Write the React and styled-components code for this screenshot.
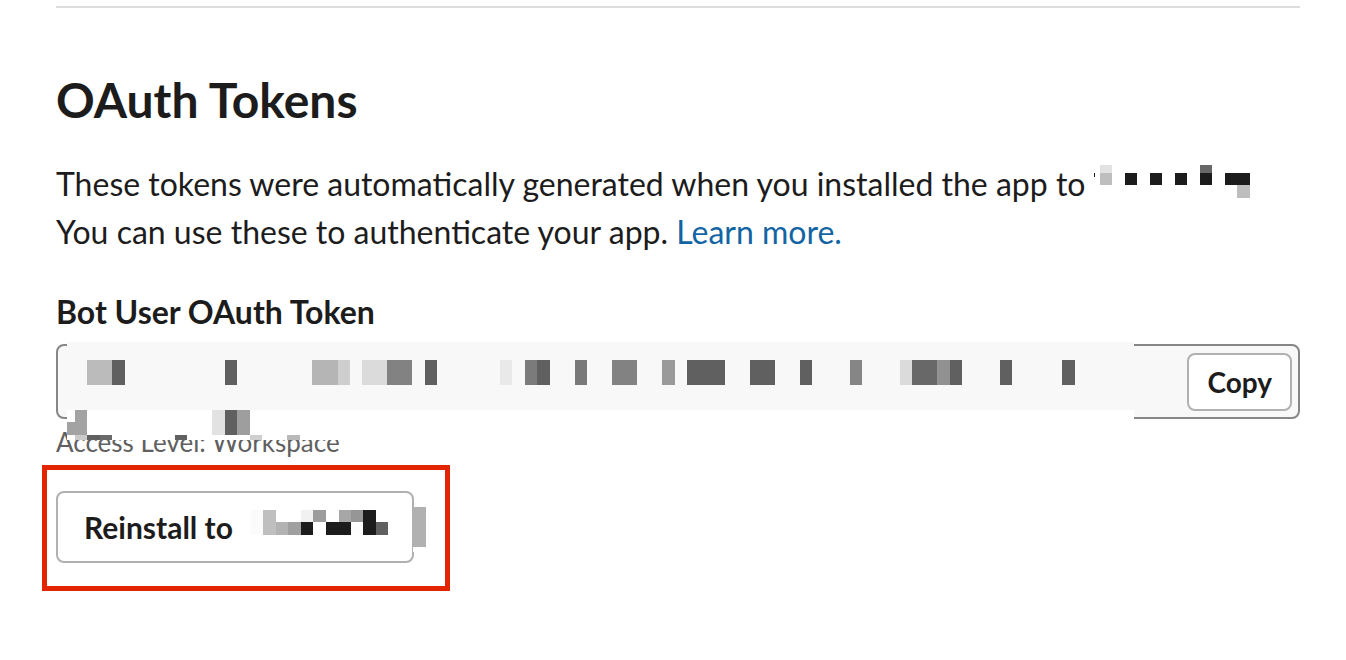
import React from "react";
import styled, { createGlobalStyle } from "styled-components";

const GlobalStyle = createGlobalStyle`
  *, *::before, *::after { box-sizing: border-box; }
  body {
    margin: 0;
    background: #fff;
    color: #1d1c1d;
    font-family: Lato, "Open Sans", sans-serif;
    font-size: 32px;
    line-height: 48px;
  }
`;

const Page = styled.main`
  padding: 6px 46px 40px 56px;
`;

const Divider = styled.hr`
  margin: 0;
  border: 0;
  border-top: 2px solid #dddddd;
`;

const Title = styled.h2`
  margin: 63px 0 31px;
  font-size: 48px;
  line-height: 58px;
  font-weight: 700;
`;

const Description = styled.p`
  margin: 0 0 32px;
`;

const Link = styled.a`
  color: #1264a3;
  text-decoration: none;
`;

const FieldLabel = styled.label`
  display: block;
  margin-bottom: 8px;
  font-weight: 700;
`;

const TokenField = styled.div`
  position: relative;
  display: flex;
  align-items: center;
  height: 75px;
  padding: 0 6px 0 16px;
  border: 2px solid #868686;
  border-radius: 8px;
  background: #f8f8f8;
`;

const TokenInput = styled.input`
  flex: 1;
  min-width: 0;
  border: 0;
  outline: 0;
  background: transparent;
  color: inherit;
  font: inherit;
`;

const Button = styled.button`
  display: flex;
  align-items: center;
  height: ${(p) => (p.$large ? 72 : 58)}px;
  padding: 0 ${(p) => (p.$large ? 24 : 18)}px 0 ${(p) => (p.$large ? 26 : 18)}px;
  gap: 18px;
  border: 2px solid #b1b1b1;
  border-radius: 8px;
  background: #fff;
  color: inherit;
  font: 700 ${(p) => (p.$large ? 30 : 28)}px/36px Lato, "Open Sans", sans-serif;
  white-space: nowrap;
`;

const Hint = styled.p`
  margin: 5px 0;
  color: #616061;
  font-size: 26px;
  line-height: 36px;
`;

const Highlight = styled.div`
  display: inline-block;
  margin-left: -14px;
  padding: 21px 31px 23px 9px;
  border: 5px solid #e32400;
`;

const ReinstallWrap = styled.div`
  position: relative;
`;

const InlineMosaic = styled.svg`
  margin-left: -3px;
  vertical-align: -2px;
`;

const TokenMosaic = styled.svg`
  position: absolute;
  z-index: 1;
  top: -4px;
  left: 9px;
  pointer-events: none;
`;

const EdgeMosaic = styled.svg`
  position: absolute;
  top: 16px;
  right: -13px;
`;

const workspaceBlocks = [
  [3, 8, 1, 4, "#1d1c1d"],
  [9, 0, 12, 8, "#e2e2e2"],
  [9, 8, 12, 12, "#bebebe"],
  [34, 8, 12, 12, "#1d1c1d"],
  [59, 8, 12, 12, "#1d1c1d"],
  [84, 8, 12, 12, "#1d1c1d"],
  [109, 0, 12, 8, "#686868"],
  [109, 8, 12, 12, "#1d1c1d"],
  [134, 8, 25, 12, "#1d1c1d"],
  [146, 20, 13, 13, "#bebebe"],
];

const tokenBlocks = [
  [0, 0, 1067, 68, "#f8f8f8"],
  [0, 68, 1067, 30, "#ffffff"],
  [20, 18, 25, 25, "#bbbbbb"],
  [45, 18, 13, 25, "#606060"],
  [158, 18, 12, 25, "#606060"],
  [245, 18, 26, 25, "#b5b5b5"],
  [271, 18, 12, 25, "#cecece"],
  [295, 18, 25, 25, "#dbdbdb"],
  [320, 18, 25, 25, "#828282"],
  [358, 18, 12, 25, "#606060"],
  [433, 18, 12, 25, "#e9e9e9"],
  [458, 18, 12, 25, "#7b7b7b"],
  [470, 18, 13, 25, "#606060"],
  [508, 18, 12, 25, "#797979"],
  [545, 18, 25, 25, "#828282"],
  [595, 18, 13, 25, "#9a9a9a"],
  [620, 18, 38, 25, "#606060"],
  [683, 18, 25, 25, "#606060"],
  [733, 18, 12, 25, "#606060"],
  [783, 18, 12, 25, "#868686"],
  [833, 18, 12, 25, "#dbdbdb"],
  [845, 18, 25, 25, "#686868"],
  [870, 18, 13, 25, "#919191"],
  [883, 18, 12, 25, "#606060"],
  [933, 18, 12, 25, "#606060"],
  [995, 18, 13, 25, "#606060"],
  [8, 68, 12, 12, "#a3a3a3"],
  [0, 80, 20, 13, "#a3a3a3"],
  [145, 68, 13, 25, "#e2e2e2"],
  [158, 68, 12, 25, "#606060"],
  [170, 68, 13, 25, "#9e9e9e"],
  [8, 93, 12, 5, "#cacaca"],
  [20, 93, 13, 5, "#606060"],
  [33, 93, 12, 5, "#6a6a6a"],
  [108, 93, 12, 5, "#606060"],
  [183, 93, 12, 5, "#cfcfcf"],
  [220, 93, 13, 5, "#b9b9b9"],
];

const reinstallBlocks = [
  [0, 0, 12, 25, "#fbfbfb"],
  [12, 0, 13, 25, "#bfbfbf"],
  [25, 12, 12, 13, "#b3b3b3"],
  [37, 12, 13, 13, "#a0a0a0"],
  [50, 0, 12, 12, "#f1f1f1"],
  [50, 12, 12, 13, "#1d1c1d"],
  [62, 0, 13, 12, "#9c9c9c"],
  [75, 12, 25, 13, "#1d1c1d"],
  [88, 0, 12, 12, "#a7a7a7"],
  [100, 0, 12, 12, "#969696"],
  [100, 12, 12, 13, "#fdfdfd"],
  [112, 0, 13, 25, "#1d1c1d"],
  [125, 12, 12, 13, "#606060"],
];

const edgeBlocks = [
  [0, 0, 13, 45, "#ffffff"],
  [0, 0, 13, 40, "#b1b1b1"],
];

function Blocks({ items }) {
  return items.map(([x, y, width, height, fill], i) => (
    <rect key={i} x={x} y={y} width={width} height={height} fill={fill} />
  ));
}

export default function App() {
  return (
    <>
      <GlobalStyle />
      <Page>
        <Divider />
        <Title>OAuth Tokens</Title>
        <Description>
          These tokens were automatically generated when you installed the app to{" "}
          <InlineMosaic width="159" height="33" shapeRendering="crispEdges" aria-hidden="true">
            <Blocks items={workspaceBlocks} />
          </InlineMosaic>
          <br />
          You can use these to authenticate your app. <Link href="#learn-more">Learn more.</Link>
        </Description>

        <FieldLabel htmlFor="bot-token">Bot User OAuth Token</FieldLabel>
        <TokenField>
          <TokenInput id="bot-token" type="text" readOnly />
          <Button type="button">Copy</Button>
          <TokenMosaic width="1067" height="98" shapeRendering="crispEdges" aria-hidden="true">
            <Blocks items={tokenBlocks} />
          </TokenMosaic>
        </TokenField>
        <Hint>Access Level: Workspace</Hint>

        <Highlight>
          <ReinstallWrap>
            <Button type="button" $large>
              Reinstall to
              <svg width="137" height="35" shapeRendering="crispEdges" aria-hidden="true">
                <Blocks items={reinstallBlocks} />
              </svg>
            </Button>
            <EdgeMosaic width="14" height="45" shapeRendering="crispEdges" aria-hidden="true">
              <Blocks items={edgeBlocks} />
            </EdgeMosaic>
          </ReinstallWrap>
        </Highlight>
      </Page>
    </>
  );
}
